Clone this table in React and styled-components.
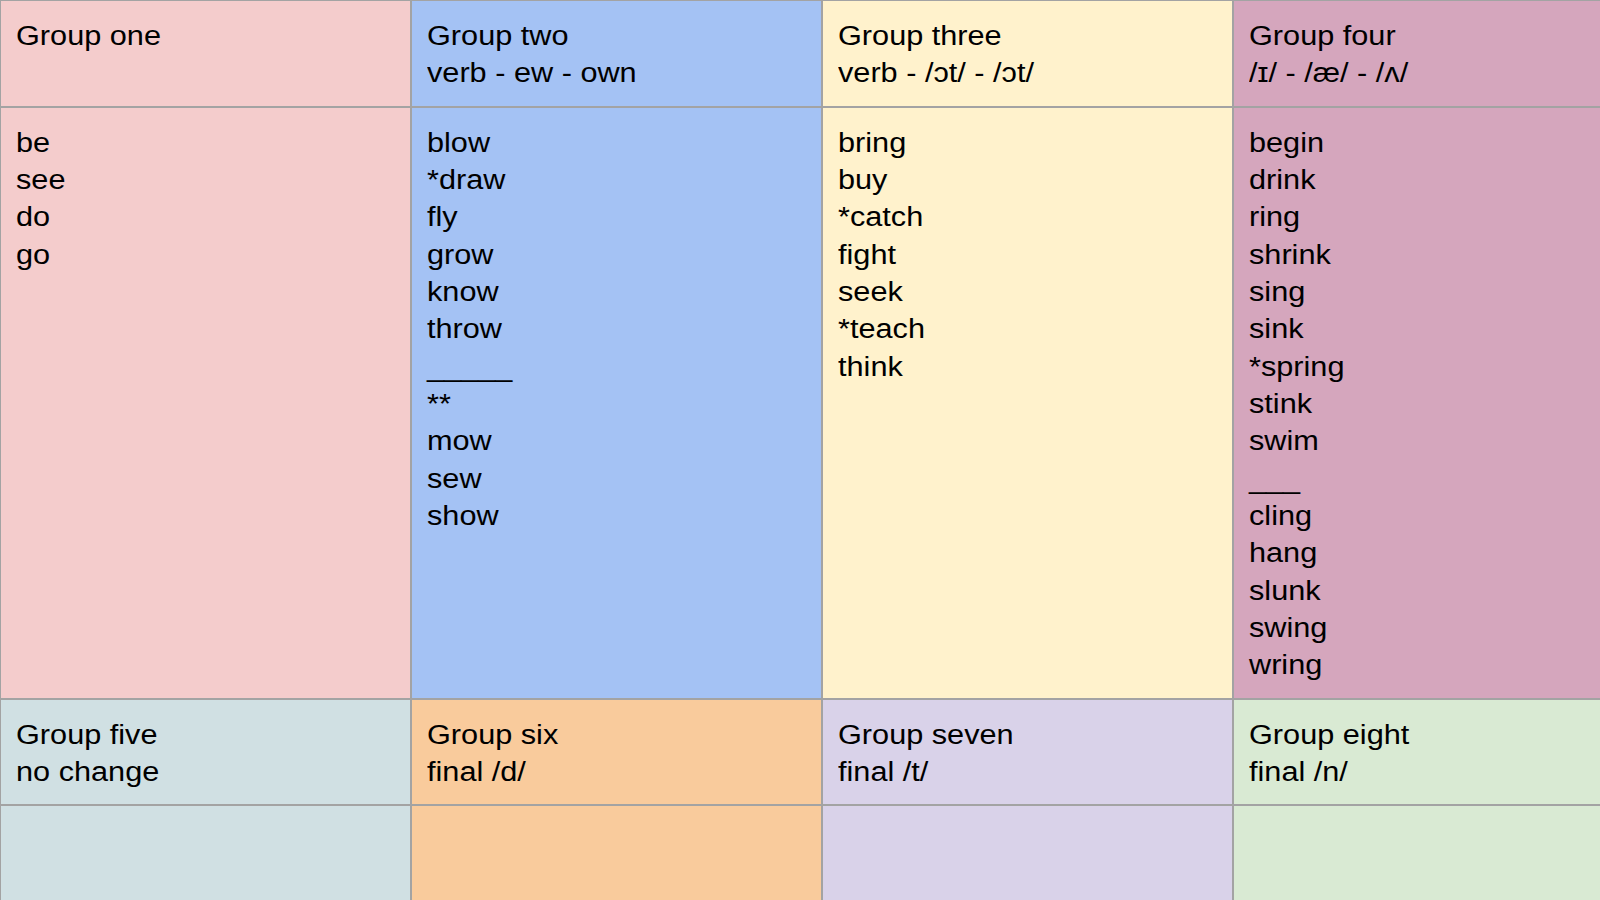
import styled, { createGlobalStyle } from "styled-components";

const GlobalStyle = createGlobalStyle`
  html, body {
    margin: 0;
    padding: 0;
    background: #ffffff;
    overflow: hidden;
  }
`;

const Page = styled.div`
  width: 1600px;
  height: 900px;
  overflow: hidden;
`;

// the slide table is wider than the window, so the last column is cut off
const Table = styled.div`
  display: grid;
  grid-template-columns: repeat(4, 411px);
  grid-auto-rows: auto;
  width: max-content;
  border-top: 1px solid #a3a3a3;
  border-left: 1px solid #a3a3a3;
`;

const Cell = styled.div`
  box-sizing: border-box;
  background: ${(p) => p.$bg};
  border-right: 2px solid #a3a3a3;
  border-bottom: 2px solid #a3a3a3;
  padding: 17px 16px 13px 15px;
  min-height: ${(p) => (p.$tall ? "200px" : "0")};
  font-family: "Liberation Sans", Arial, sans-serif;
  font-size: 27px;
  line-height: 37.33px;
  color: #000000;
`;

// text in the reference is rendered a little wide
const Lines = styled.div`
  transform: scaleX(1.136);
  transform-origin: left top;
  white-space: pre;
`;

const Line = styled.div`
  height: 37.33px;
`;

const colors = {
  one: "#f4cccc",
  two: "#a4c2f4",
  three: "#fff2cc",
  four: "#d5a6bd",
  five: "#d0e0e3",
  six: "#f9cb9c",
  seven: "#d9d2e9",
  eight: "#d9ead3",
};

const topGroups = [
  {
    key: "one",
    head: ["Group one"],
    words: ["be", "see", "do", "go"],
  },
  {
    key: "two",
    head: ["Group two", "verb - ew - own"],
    words: ["blow", "*draw", "fly", "grow", "know", "throw", "_____", "**", "mow", "sew", "show"],
  },
  {
    key: "three",
    head: ["Group three", "verb - /ɔt/ - /ɔt/"],
    words: ["bring", "buy", "*catch", "fight", "seek", "*teach", "think"],
  },
  {
    key: "four",
    head: ["Group four", "/ɪ/ - /æ/ - /ʌ/"],
    words: [
      "begin", "drink", "ring", "shrink", "sing", "sink", "*spring", "stink", "swim",
      "___", "cling", "hang", "slunk", "swing", "wring",
    ],
  },
];

const bottomGroups = [
  { key: "five", head: ["Group five", "no change"] },
  { key: "six", head: ["Group six", "final /d/"] },
  { key: "seven", head: ["Group seven", "final /t/"] },
  { key: "eight", head: ["Group eight", "final /n/"] },
];

function TextBlock({ lines }) {
  return (
    <Lines>
      {lines.map((l, i) => (
        <Line key={i}>{l}</Line>
      ))}
    </Lines>
  );
}

export default function App() {
  return (
    <Page>
      <GlobalStyle />
      <Table>
        {topGroups.map((g) => (
          <Cell key={g.key + "-h"} $bg={colors[g.key]}>
            <TextBlock lines={g.head} />
          </Cell>
        ))}
        {topGroups.map((g) => (
          <Cell key={g.key + "-b"} $bg={colors[g.key]}>
            <TextBlock lines={g.words} />
          </Cell>
        ))}
        {bottomGroups.map((g) => (
          <Cell key={g.key + "-h"} $bg={colors[g.key]}>
            <TextBlock lines={g.head} />
          </Cell>
        ))}
        {bottomGroups.map((g) => (
          <Cell key={g.key + "-b"} $bg={colors[g.key]} $tall />
        ))}
      </Table>
    </Page>
  );
}
